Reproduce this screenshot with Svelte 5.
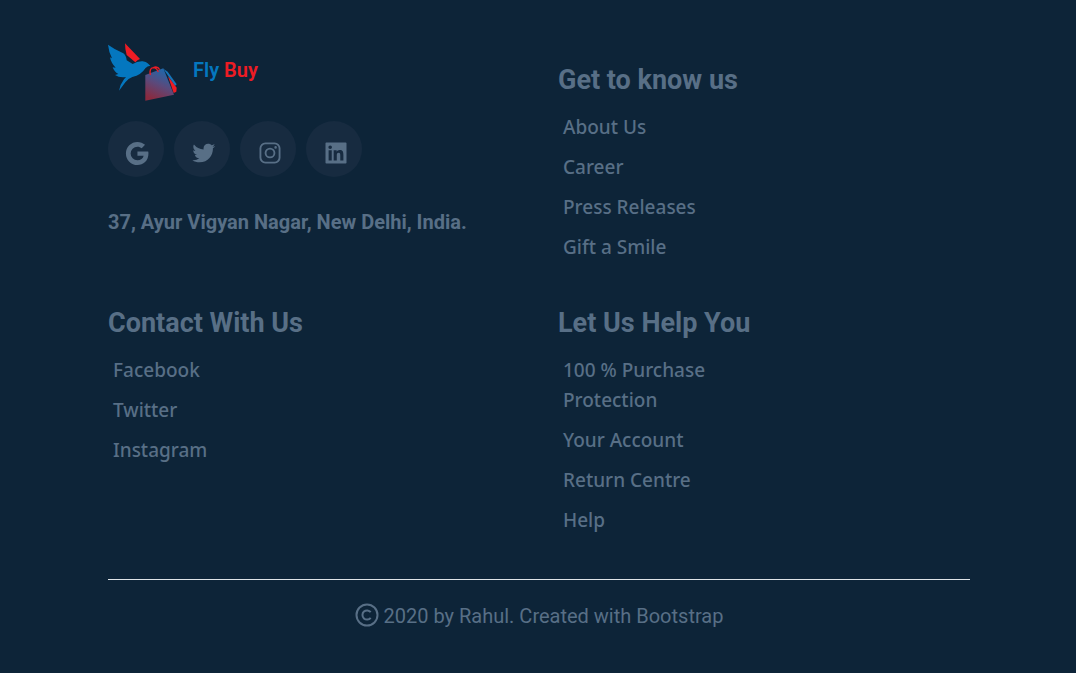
<script>
  const social = [
    {
      name: 'Google',
      size: 31,
      path: 'M20.283 10.356h-8.327v3.451h4.792c-.446 2.193-2.313 3.453-4.792 3.453a5.27 5.27 0 0 1-5.279-5.28 5.27 5.27 0 0 1 5.279-5.279c1.259 0 2.397.447 3.29 1.178l2.6-2.599c-1.584-1.381-3.615-2.233-5.89-2.233a8.908 8.908 0 0 0-8.934 8.934 8.907 8.907 0 0 0 8.934 8.934c4.467 0 8.529-3.249 8.529-8.934 0-.528-.081-1.097-.202-1.625z'
    },
    {
      name: 'Twitter',
      size: 28,
      path: 'M19.633 7.997c.013.175.013.349.013.523 0 5.325-4.053 11.461-11.46 11.461-2.282 0-4.402-.661-6.186-1.809.324.037.636.05.973.05a8.07 8.07 0 0 0 5.001-1.721 4.036 4.036 0 0 1-3.767-2.793c.249.037.499.062.761.062.361 0 .724-.05 1.061-.137a4.027 4.027 0 0 1-3.23-3.953v-.05c.537.299 1.16.486 1.82.511a4.022 4.022 0 0 1-1.796-3.354c0-.748.199-1.434.548-2.032a11.457 11.457 0 0 0 8.306 4.215c-.062-.3-.1-.611-.1-.923a4.026 4.026 0 0 1 4.028-4.028c1.16 0 2.207.486 2.943 1.272a7.957 7.957 0 0 0 2.556-.973 4.02 4.02 0 0 1-1.771 2.22 8.073 8.073 0 0 0 2.319-.624 7.645 7.645 0 0 1-2.019 2.083z'
    },
    {
      name: 'Instagram',
      size: 28,
      path: 'M8 3h8a5 5 0 0 1 5 5v8a5 5 0 0 1-5 5H8a5 5 0 0 1-5-5V8a5 5 0 0 1 5-5zm.2 1.600a3.600 3.600 0 0 0-3.600 3.600v7.600a3.600 3.600 0 0 0 3.600 3.600h7.600a3.600 3.600 0 0 0 3.600-3.600V8.200a3.600 3.600 0 0 0-3.600-3.600zM12 7.400a4.600 4.600 0 1 1 0 9.200 4.600 4.600 0 0 1 0-9.200zm0 1.600a3 3 0 1 0 0 6 3 3 0 0 0 0-6zM16.800 6.100a1.100 1.100 0 1 1 0 2.200 1.100 1.100 0 0 1 0-2.200z'
    },
    {
      name: 'LinkedIn',
      size: 28,
      path: 'M20.300 3H3.700a.7.7 0 0 0-.7.7v16.600a.7.7 0 0 0 .7.7h16.600a.7.7 0 0 0 .7-.7V3.700a.7.7 0 0 0-.7-.7zM8.339 18.337H5.667v-8.590h2.672v8.590zM7.003 8.574a1.548 1.548 0 1 1 0-3.096 1.548 1.548 0 0 1 0 3.096zm11.335 9.763h-2.669V14.160c0-.996-.018-2.277-1.388-2.277-1.390 0-1.601 1.086-1.601 2.207v4.248h-2.667v-8.590h2.560v1.174h.037c.355-.675 1.227-1.387 2.524-1.387 2.704 0 3.203 1.778 3.203 4.092v4.710z'
    }
  ];

  const about = { title: 'Get to know us', links: ['About Us', 'Career', 'Press Releases', 'Gift a Smile'] };
  const contact = { title: 'Contact With Us', links: ['Facebook', 'Twitter', 'Instagram'] };
  const help = { title: 'Let Us Help You', links: ['100 % Purchase Protection', 'Your Account', 'Return Centre', 'Help'] };
</script>

{#snippet linkColumn(group)}
  <nav class="column" aria-label={group.title}>
    <h2>{group.title}</h2>
    <ul class="links">
      {#each group.links as link}
        <li><a href="#top">{link}</a></li>
      {/each}
    </ul>
  </nav>
{/snippet}

<footer>
  <div class="grid">
    <section class="company">
      <a class="brand" href="#top">
        <svg class="logo" viewBox="24 19 207 177" aria-hidden="true">
          <defs>
            <linearGradient id="bag" x1="0.75" y1="0.05" x2="0.35" y2="1">
              <stop offset="0" stop-color="#1c69ad" />
              <stop offset="0.5" stop-color="#5a4a7c" />
              <stop offset="1" stop-color="#8a2a3f" />
            </linearGradient>
          </defs>
          <path fill="#0477bf" d="M24 27 L44 40 L70 53 Q79 60 80 74 L98 85 Q112 76 128 77 Q139 78 143 83 L151 90 Q142 91 136 98 Q124 118 97 124 Q85 128 76 140 L57 165 Q60 147 72 131 L78 124 Q58 127 45 118 L55 115 Q42 108 38 95 L47 96 Q33 82 30 65 L36 68 Q26 48 24 27z" />
          <path fill="#ed1c24" d="M75 23 L120 70 Q112 73 106 80 L80 58 Q75 42 75 23z" />
          <path fill="#1674b8" d="M190 99 L203 108 L230 146 L225 151z" />
          <path fill="#ed1c24" d="M204 122 L230 156 L229 168 L221 172z" />
          <path fill="url(#bag)" d="M136 118 L190 98 L222 177 L136 195z" />
          <path fill="none" stroke="#ed1c24" stroke-width="4" d="M151 118 Q147 97 160 96 Q170 96 175 109 M160 96 Q172 90 179 102" />
        </svg>
        <span class="name"><span class="fly">Fly</span> <span class="buy">Buy</span></span>
      </a>
      <ul class="social">
        {#each social as item}
          <li>
            <a href="#top" aria-label={item.name}>
              <svg width={item.size} height={item.size} viewBox="0 0 24 24" aria-hidden="true">
                <path fill="currentColor" fill-rule="evenodd" d={item.path} />
              </svg>
            </a>
          </li>
        {/each}
      </ul>
      <address>37, Ayur Vigyan Nagar, New Delhi, India.</address>
    </section>
    {@render linkColumn(about)}
    {@render linkColumn(contact)}
    {@render linkColumn(help)}
  </div>
  <p class="copyright">
    <svg width="24" height="24" viewBox="0 0 24 24" aria-hidden="true">
      <g fill="none" stroke="currentColor" stroke-width="2">
        <circle cx="12" cy="12" r="10.500" />
        <path d="M15.700 9.200A4.600 4.600 0 1 0 15.700 14.800" />
      </g>
    </svg>
    <span>2020 by Rahul. Created with Bootstrap</span>
  </p>
</footer>

<style>
  :global(body) {
    margin: 0;
    background: #0d2438;
  }

  footer {
    box-sizing: border-box;
    min-height: 100vh;
    padding: 40px 106px 40px 108px;
    background: #0d2438;
    color: #586f86;
    font-family: Roboto, sans-serif;
    font-size: 20px;
    line-height: 30px;
  }

  a {
    color: inherit;
    text-decoration: none;
  }

  ul {
    margin: 0;
    padding: 0;
    list-style: none;
  }

  .grid {
    display: grid;
    grid-template-columns: 1fr 1fr;
    column-gap: 38px;
    row-gap: 43px;
  }

  .column {
    padding-top: 22px;
  }

  .column:nth-child(n + 3) {
    padding-top: 0;
  }

  .brand {
    display: flex;
    align-items: center;
    gap: 16px;
    height: 63px;
  }

  .logo {
    width: 69px;
    height: 59px;
  }

  .name {
    padding-bottom: 4px;
    font-weight: 600;
  }

  .fly {
    color: #0477bf;
  }

  .buy {
    color: #ed1c24;
  }

  .social {
    display: flex;
    gap: 10px;
    margin-top: 18px;
  }

  .social a {
    display: flex;
    align-items: center;
    justify-content: center;
    box-sizing: border-box;
    width: 56px;
    height: 56px;
    padding: 8px 0 0 3px;
    border-radius: 50%;
    background: #172b40;
  }

  address {
    margin-top: 30px;
    font-style: normal;
    font-weight: 700;
  }

  h2 {
    margin: 0 0 14px;
    font-size: 27px;
    font-weight: 700;
    line-height: 36px;
  }

  .links {
    display: flex;
    flex-direction: column;
    gap: 10px;
    max-width: 200px;
    padding-left: 5px;
    font-family: "Noto Sans", "Open Sans", sans-serif;
    font-size: 19px;
    font-weight: 500;
  }

  .copyright {
    display: flex;
    align-items: center;
    justify-content: center;
    gap: 5px;
    margin: 44px 0 0;
    padding-top: 19px;
    border-top: 1px solid #dfe4e8;
  }

  .copyright span {
    padding-top: 2px;
  }
</style>
